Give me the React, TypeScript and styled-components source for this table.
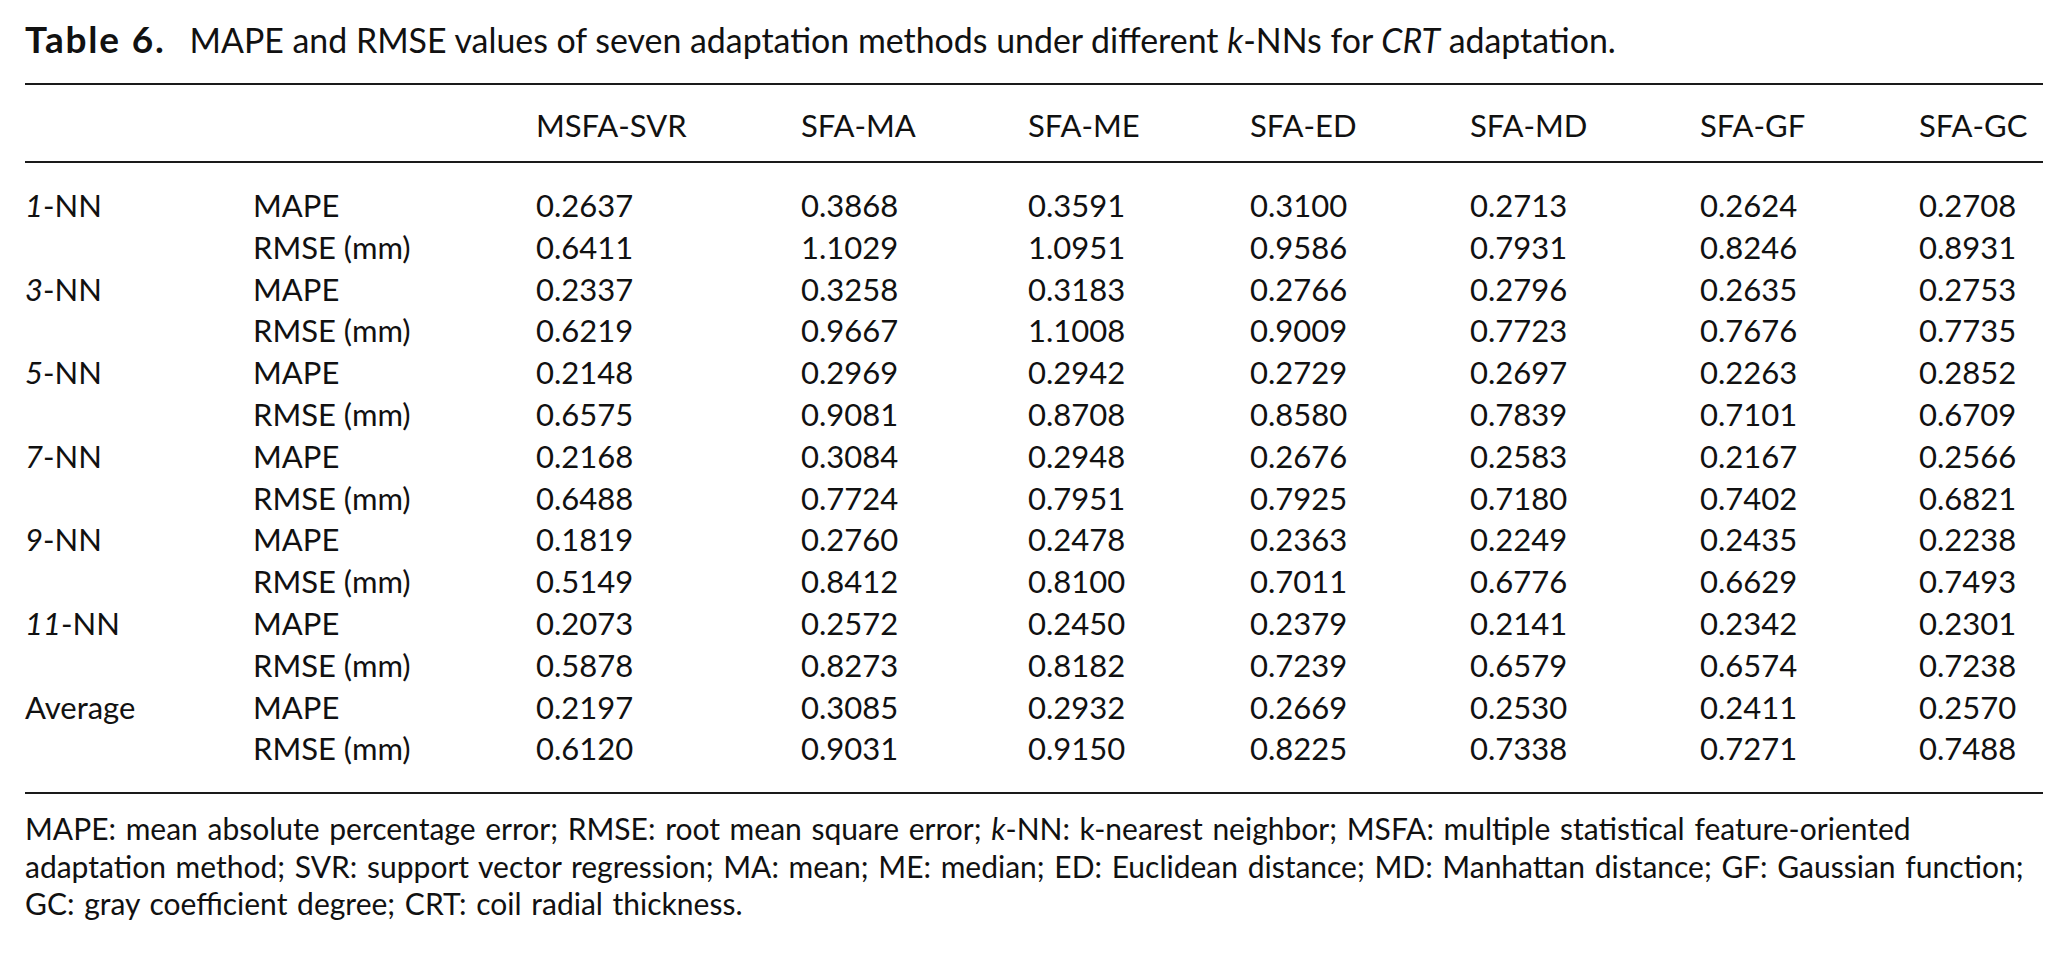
import React from "react";
import styled, { createGlobalStyle } from "styled-components";

const GlobalStyle = createGlobalStyle`
  html, body {
    margin: 0;
    padding: 0;
    background: #ffffff;
  }
  body {
    font-family: Lato, "Open Sans", "Liberation Sans", sans-serif;
    color: #111111;
  }
`;

const Page = styled.div`
  width: 2018px;
  padding: 19px 0 0 25px;
`;

const Caption = styled.div`
  font-size: 33.9px;
  line-height: 40px;
  white-space: nowrap;
`;

const CaptionLabel = styled.span`
  font-weight: 700;
  font-size: 37px;
  letter-spacing: 1.8px;
  margin-right: 24px;
`;

const Table = styled.div`
  margin-top: 23px;
  border-top: 2px solid #1a1a1a;
  border-bottom: 2px solid #1a1a1a;
  font-size: 31px;
`;

const Head = styled.div`
  padding: 20px 0 16px;
  border-bottom: 2px solid #1a1a1a;
  line-height: 40px;
`;

const Body = styled.div`
  padding: 22px 0 22px;
  line-height: 41.8px;
`;

const Row = styled.div`
  display: grid;
  grid-template-columns: 228px 283px 265px 227px 222px 220px 230px 219px 1fr;
  white-space: nowrap;
`;

const Cell = styled.div``;

const Notes = styled.p`
  margin: 16px 0 0;
  font-size: 30px;
  line-height: 37.5px;
  word-spacing: 2px;
`;

const methods = ["MSFA-SVR", "SFA-MA", "SFA-ME", "SFA-ED", "SFA-MD", "SFA-GF", "SFA-GC"];

interface Group {
  k: string;
  italic: boolean;
  mape: string[];
  rmse: string[];
}

const groups: Group[] = [
  {
    k: "1",
    italic: true,
    mape: ["0.2637", "0.3868", "0.3591", "0.3100", "0.2713", "0.2624", "0.2708"],
    rmse: ["0.6411", "1.1029", "1.0951", "0.9586", "0.7931", "0.8246", "0.8931"],
  },
  {
    k: "3",
    italic: true,
    mape: ["0.2337", "0.3258", "0.3183", "0.2766", "0.2796", "0.2635", "0.2753"],
    rmse: ["0.6219", "0.9667", "1.1008", "0.9009", "0.7723", "0.7676", "0.7735"],
  },
  {
    k: "5",
    italic: true,
    mape: ["0.2148", "0.2969", "0.2942", "0.2729", "0.2697", "0.2263", "0.2852"],
    rmse: ["0.6575", "0.9081", "0.8708", "0.8580", "0.7839", "0.7101", "0.6709"],
  },
  {
    k: "7",
    italic: true,
    mape: ["0.2168", "0.3084", "0.2948", "0.2676", "0.2583", "0.2167", "0.2566"],
    rmse: ["0.6488", "0.7724", "0.7951", "0.7925", "0.7180", "0.7402", "0.6821"],
  },
  {
    k: "9",
    italic: true,
    mape: ["0.1819", "0.2760", "0.2478", "0.2363", "0.2249", "0.2435", "0.2238"],
    rmse: ["0.5149", "0.8412", "0.8100", "0.7011", "0.6776", "0.6629", "0.7493"],
  },
  {
    k: "11",
    italic: true,
    mape: ["0.2073", "0.2572", "0.2450", "0.2379", "0.2141", "0.2342", "0.2301"],
    rmse: ["0.5878", "0.8273", "0.8182", "0.7239", "0.6579", "0.6574", "0.7238"],
  },
  {
    k: "Average",
    italic: false,
    mape: ["0.2197", "0.3085", "0.2932", "0.2669", "0.2530", "0.2411", "0.2570"],
    rmse: ["0.6120", "0.9031", "0.9150", "0.8225", "0.7338", "0.7271", "0.7488"],
  },
];

const GroupLabel = ({ g }: { g: Group }) =>
  g.italic ? (
    <>
      <i>{g.k}</i>-NN
    </>
  ) : (
    <>{g.k}</>
  );

const App = () => {
  return (
    <Page>
      <GlobalStyle />
      <Caption>
        <CaptionLabel>Table 6.</CaptionLabel>
        MAPE and RMSE values of seven adaptation methods under different <i>k</i>-NNs for{" "}
        <i>CRT</i> adaptation.
      </Caption>
      <Table>
        <Head>
          <Row>
            <Cell />
            <Cell />
            {methods.map((m) => (
              <Cell key={m}>{m}</Cell>
            ))}
          </Row>
        </Head>
        <Body>
          {groups.map((g) => (
            <React.Fragment key={g.k}>
              <Row>
                <Cell>
                  <GroupLabel g={g} />
                </Cell>
                <Cell>MAPE</Cell>
                {g.mape.map((v, i) => (
                  <Cell key={i}>{v}</Cell>
                ))}
              </Row>
              <Row>
                <Cell />
                <Cell>RMSE (mm)</Cell>
                {g.rmse.map((v, i) => (
                  <Cell key={i}>{v}</Cell>
                ))}
              </Row>
            </React.Fragment>
          ))}
        </Body>
      </Table>
      <Notes>
        MAPE: mean absolute percentage error; RMSE: root mean square error; <i>k</i>-NN: k-nearest
        neighbor; MSFA: multiple statistical feature-oriented adaptation method; SVR: support vector
        regression; MA: mean; ME: median; ED: Euclidean distance; MD: Manhattan distance; GF:
        Gaussian function; GC: gray coefficient degree; CRT: coil radial thickness.
      </Notes>
    </Page>
  );
};

export default App;
